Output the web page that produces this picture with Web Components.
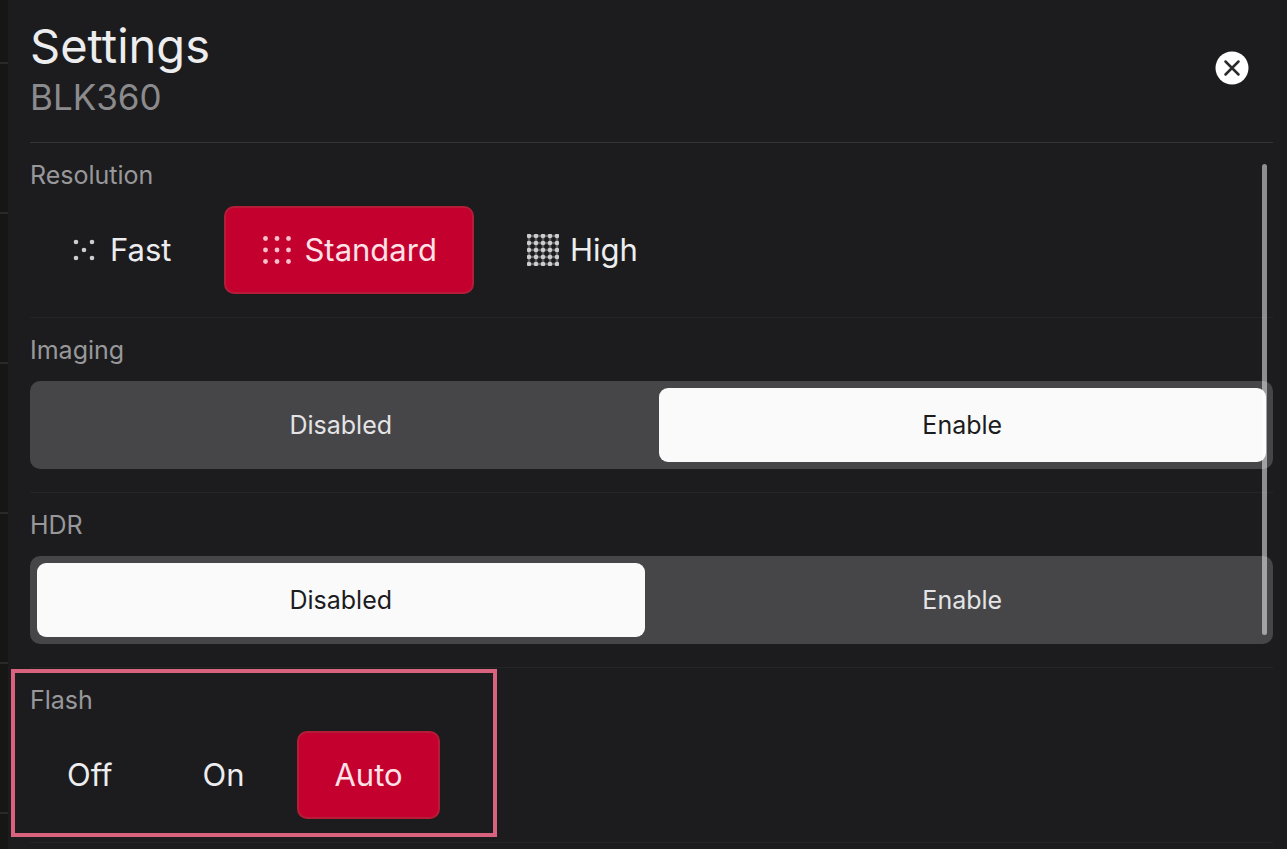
<!DOCTYPE html>
<html lang="en">
<head>
<meta charset="utf-8">
<meta name="viewport" content="width=device-width, initial-scale=1">
<title>Settings</title>
<style>
body {
  margin: 0;
  background: #1c1c1e;
  color: #ededef;
  font-family: Inter, "Liberation Sans", sans-serif;
}
</style>
</head>
<body>
<settings-panel>
  <panel-header slot="header" subtitle="BLK360">Settings</panel-header>
  <setting-group label="Resolution">
    <option-button dots="fast">Fast</option-button>
    <option-button dots="standard" selected>Standard</option-button>
    <option-button dots="high">High</option-button>
  </setting-group>
  <setting-group label="Imaging">
    <segmented-control options="Disabled,Enable" value="Enable"></segmented-control>
  </setting-group>
  <setting-group label="HDR">
    <segmented-control options="Disabled,Enable" value="Disabled"></segmented-control>
  </setting-group>
  <setting-group label="Flash" highlight>
    <option-button>Off</option-button>
    <option-button>On</option-button>
    <option-button selected>Auto</option-button>
  </setting-group>
</settings-panel>

<script>
(() => {
  'use strict';

  class SettingsPanel extends HTMLElement {
    constructor() {
      super();
      this.attachShadow({ mode: 'open' }).innerHTML = `
<style>
:host {
  display: grid;
  grid-template-columns: 8px minmax(0, 1fr);
  min-height: 100vh;
}

/* sliver of the grid view behind the panel */
.behind {
  background: repeating-linear-gradient(#161714 0 62px, #292a28 62px 64px, #161714 64px 150px);
}

.panel {
  padding: 0 14px 0 22px;
}

.body {
  position: relative;
}

.scrollbar {
  position: absolute;
  top: 21px;
  right: 6px;
  width: 5px;
  height: 471px;
  border-radius: 3px;
  background: rgba(255, 255, 255, 0.5);
  pointer-events: none;
}
</style>
<div class="behind"></div>
<main class="panel">
  <slot name="header"></slot>
  <div class="body">
    <slot></slot>
    <div class="scrollbar"></div>
  </div>
</main>
`;
    }
  }

  class PanelHeader extends HTMLElement {
    constructor() {
      super();
      this.attachShadow({ mode: 'open' }).innerHTML = `
<style>
:host {
  display: flex;
  justify-content: space-between;
  align-items: center;
  box-sizing: border-box;
  padding: 17px 24px 23px 0;
  border-bottom: 1px solid #343436;
}

h1, p {
  margin: 0;
  font-weight: 400;
}

h1 {
  font-size: 47px;
  line-height: 58px;
}

p {
  color: #8b8b8e;
  font-size: 35px;
  line-height: 44px;
}

button {
  display: block;
  padding: 0;
  border: 0;
  background: none;
  cursor: pointer;
}

svg {
  display: block;
}
</style>
<div>
  <h1><slot></slot></h1>
  <p></p>
</div>
<button type="button" aria-label="Close">
  <svg width="34" height="34" viewBox="0 0 34 34">
    <circle cx="17" cy="17" r="16.5" fill="#fff"/>
    <path d="M10.5 10.5l13 13M23.5 10.5l-13 13" stroke="#2a2a2c" stroke-width="2.5" stroke-linecap="round"/>
  </svg>
</button>
`;
    }

    connectedCallback() {
      this.shadowRoot.querySelector('p').textContent = this.getAttribute('subtitle');
    }
  }

  class SettingGroup extends HTMLElement {
    constructor() {
      super();
      this.attachShadow({ mode: 'open' }).innerHTML = `
<style>
:host {
  display: block;
  position: relative;
  padding: 16px 0 23px;
  border-bottom: 1px solid #252527;
}

:host([highlight])::after {
  content: "";
  position: absolute;
  top: 1px;
  left: -19px;
  box-sizing: border-box;
  width: 486px;
  height: 168px;
  border: 4px solid #d9637f;
  pointer-events: none;
}

h2 {
  margin: 0 0 15px;
  color: #98989b;
  font-size: 25px;
  font-weight: 400;
  line-height: 32px;
}

.controls {
  display: flex;
  gap: 16px;
}
</style>
<h2 id="label"></h2>
<div class="controls" role="group" aria-labelledby="label"><slot></slot></div>
`;
    }

    connectedCallback() {
      this.shadowRoot.querySelector('h2').textContent = this.getAttribute('label');
    }
  }

  // dot patterns: grid positions in a 32px box
  const grid = (steps, r) => steps.map(y => steps.map(x =>
    `<circle cx="${x}" cy="${y}" r="${r}"/>`).join('')).join('');

  const DOTS = {
    fast: [[9, 8], [25, 8], [17, 16], [9, 24], [25, 24]].map(([x, y]) =>
      `<circle cx="${x}" cy="${y}" r="2.3"/>`).join(''),
    standard: grid([4.5, 16, 27.5], 2.4),
    high: grid([2, 9, 16, 23, 30], 2.3) +
      '<path d="M2 2H30V30H2zM9 2V30M16 2V30M23 2V30M2 9H30M2 16H30M2 23H30" fill="none" stroke="currentColor" stroke-opacity=".35" stroke-width="2.5"/>'
  };

  class OptionButton extends HTMLElement {
    constructor() {
      super();
      this.attachShadow({ mode: 'open' }).innerHTML = `
<style>
:host {
  display: block;
}

button {
  display: flex;
  align-items: center;
  gap: 11px;
  height: 88px;
  padding: 0 35px;
  border: 2px solid transparent;
  border-radius: 10px;
  background: none;
  color: inherit;
  font: 31px/40px Inter, "Liberation Sans", sans-serif;
  white-space: nowrap;
  cursor: pointer;
}

:host([selected]) button {
  border-color: #b51c38;
  background: #c4002f;
  color: #ffe1e6;
}

svg {
  fill: currentColor;
  opacity: 0.85;
}
</style>
<button type="button"><slot></slot></button>
`;
      this.shadowRoot.querySelector('button').addEventListener('click', () => {
        for (const el of this.parentElement.querySelectorAll('option-button')) {
          el.toggleAttribute('selected', el === this);
        }
      });
    }

    static get observedAttributes() {
      return ['selected'];
    }

    connectedCallback() {
      const dots = DOTS[this.getAttribute('dots')];
      const $button = this.shadowRoot.querySelector('button');
      if (dots && !$button.querySelector('svg')) {
        $button.insertAdjacentHTML('afterbegin',
          `<svg width="32" height="32" viewBox="0 0 32 32" aria-hidden="true">${dots}</svg>`);
      }
    }

    attributeChangedCallback() {
      this.shadowRoot.querySelector('button')
        .setAttribute('aria-pressed', this.hasAttribute('selected'));
    }
  }

  class SegmentedControl extends HTMLElement {
    constructor() {
      super();
      this.attachShadow({ mode: 'open' }).innerHTML = `
<style>
:host {
  display: grid;
  grid-auto-flow: column;
  grid-auto-columns: 1fr;
  gap: 14px;
  flex: 1;
  box-sizing: border-box;
  height: 88px;
  padding: 7px;
  border-radius: 10px;
  background: #464648;
}

button {
  padding: 0;
  border: 0;
  border-radius: 9px;
  background: none;
  color: #e4e4e6;
  font: 25px/32px Inter, "Liberation Sans", sans-serif;
  cursor: pointer;
}

button[aria-pressed="true"] {
  background: #fafafa;
  color: #1c1c1e;
}
</style>
`;
    }

    connectedCallback() {
      for (const name of this.getAttribute('options').split(',')) {
        const $button = document.createElement('button');
        $button.type = 'button';
        $button.textContent = name;
        $button.addEventListener('click', () => this._select(name));
        this.shadowRoot.append($button);
      }
      this._select(this.getAttribute('value'));
    }

    _select(name) {
      for (const $button of this.shadowRoot.querySelectorAll('button')) {
        $button.setAttribute('aria-pressed', $button.textContent === name);
      }
    }
  }

  customElements.define('settings-panel', SettingsPanel);
  customElements.define('panel-header', PanelHeader);
  customElements.define('setting-group', SettingGroup);
  customElements.define('option-button', OptionButton);
  customElements.define('segmented-control', SegmentedControl);
})();
</script>
</body>
</html>
